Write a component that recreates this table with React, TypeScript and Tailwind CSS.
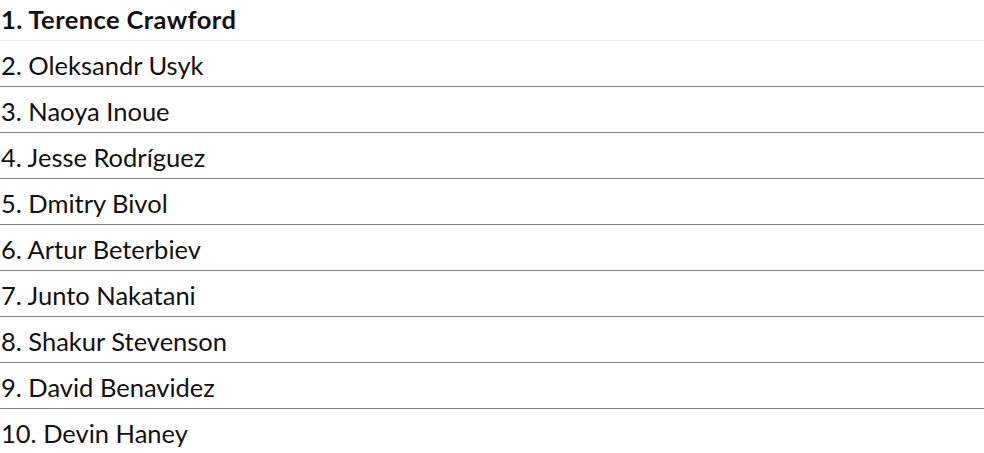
import React from 'react';

const boxers = [
  'Terence Crawford',
  'Oleksandr Usyk',
  'Naoya Inoue',
  'Jesse Rodríguez',
  'Dmitry Bivol',
  'Artur Beterbiev',
  'Junto Nakatani',
  'Shakur Stevenson',
  'David Benavidez',
  'Devin Haney',
];

const App: React.FC = () => {
  return (
    <div className="w-[984px] h-[453px] bg-white overflow-hidden text-[#111] font-['Lato',sans-serif] text-[25.5px]">
      <ol>
        {boxers.map((name, i) => (
          <li
            key={name}
            className={
              i === 0
                ? 'h-[41px] flex items-center pl-[1px] pb-[2px] font-bold tracking-[0.4px] border-b border-[#ececec]'
                : 'h-[46px] flex items-center pl-[1px] pt-[3px] border-b border-[#808080] last:border-b-0'
            }
          >
            {i + 1}. {name}
          </li>
        ))}
      </ol>
    </div>
  );
};

export default App;
